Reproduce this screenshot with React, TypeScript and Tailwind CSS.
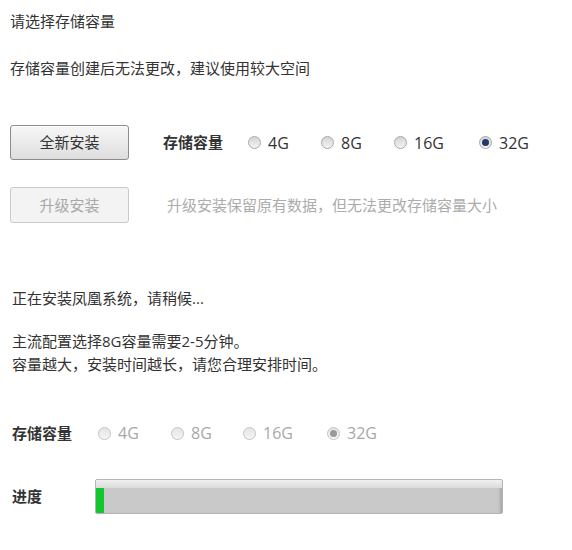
import React from 'react';

const font = "font-['Open_Sans','Noto_Sans_CJK_SC',sans-serif]";

function Radio({ label, checked, disabled, width }: { label: string; checked?: boolean; disabled?: boolean; width: string }) {
  return (
    <div className={`flex items-center ${width}`}>
      <span
        className={`relative flex h-[13px] w-[13px] items-center justify-center rounded-full border ${
          disabled ? 'border-[#c4c4c4] bg-linear-to-b from-[#e4e4e4] to-[#f6f6f6]' : 'border-[#a9a9a9] bg-linear-to-b from-[#d4d4d4] to-[#f4f4f4]'
        }`}
      >
        {checked && (
          <span className={`h-[7px] w-[7px] rounded-full ${disabled ? 'bg-[#9a9a9a]' : 'bg-[#24386a]'}`} />
        )}
      </span>
      <span className={`ml-[7px] text-[16px] ${disabled ? 'text-[#a8a8a8]' : 'text-[#333]'}`}>{label}</span>
    </div>
  );
}

function App() {
  return (
    <div className={`h-[550px] w-[572px] bg-white ${font} text-[15px] text-[#333]`}>
      <div className="pl-[10px] pt-[11px]">
        <p className="leading-[20px]">请选择存储容量</p>
        <p className="mt-[27px] leading-[20px]">存储容量创建后无法更改，建议使用较大空间</p>

        <div className="mt-[47px] flex h-[35px] items-center">
          <button className="h-[35px] w-[119px] rounded-[3px] border border-[#8c8c8c] bg-linear-to-b from-[#f7f7f7] to-[#dedede] text-[15px] text-[#333] shadow-[inset_0_1px_0_#fff]">
            全新安装
          </button>
          <span className="ml-[34px] w-[85px] font-bold">存储容量</span>
          <Radio label="4G" width="w-[73px]" />
          <Radio label="8G" width="w-[73px]" />
          <Radio label="16G" width="w-[85px]" />
          <Radio label="32G" checked width="w-[60px]" />
        </div>

        <div className="mt-[27px] flex h-[36px] items-center">
          <button className="h-[36px] w-[119px] rounded-[3px] border border-[#cacaca] bg-[#f3f3f3] text-[15px] text-[#a8a8a8]">
            升级安装
          </button>
          <span className="ml-[38px] text-[#acacac]">升级安装保留原有数据，但无法更改存储容量大小</span>
        </div>
      </div>

      <div className="pl-[12px]">
        <p className="mt-[65px] leading-[20px]">正在安装凤凰系统，请稍候...</p>
        <p className="mt-[22px] leading-[23px]">
          主流配置选择8G容量需要2-5分钟。
          <br />
          容量越大，安装时间越长，请您合理安排时间。
        </p>

        <div className="mt-[45px] flex h-[24px] items-center">
          <span className="w-[86px] font-bold">存储容量</span>
          <Radio label="4G" disabled width="w-[73px]" />
          <Radio label="8G" disabled width="w-[72px]" />
          <Radio label="16G" disabled width="w-[84px]" />
          <Radio label="32G" checked disabled width="w-[60px]" />
        </div>

        <div className="mt-[34px] flex items-center">
          <span className="w-[83px] font-bold">进度</span>
          <div className="flex h-[35px] w-[408px] flex-col overflow-hidden rounded-[2px] border border-[#b4b4b4] bg-[#c9c9c9] shadow-[inset_-4px_0_3px_-2px_#a8a8a8]">
            <div className="h-[8px] bg-linear-to-b from-[#f0f0f0] to-[#dcdcdc]" />
            <div className="flex flex-1">
              <div className="w-[8px] bg-[#12c72e]" />
            </div>
          </div>
        </div>
      </div>
    </div>
  );
}

export default App;
